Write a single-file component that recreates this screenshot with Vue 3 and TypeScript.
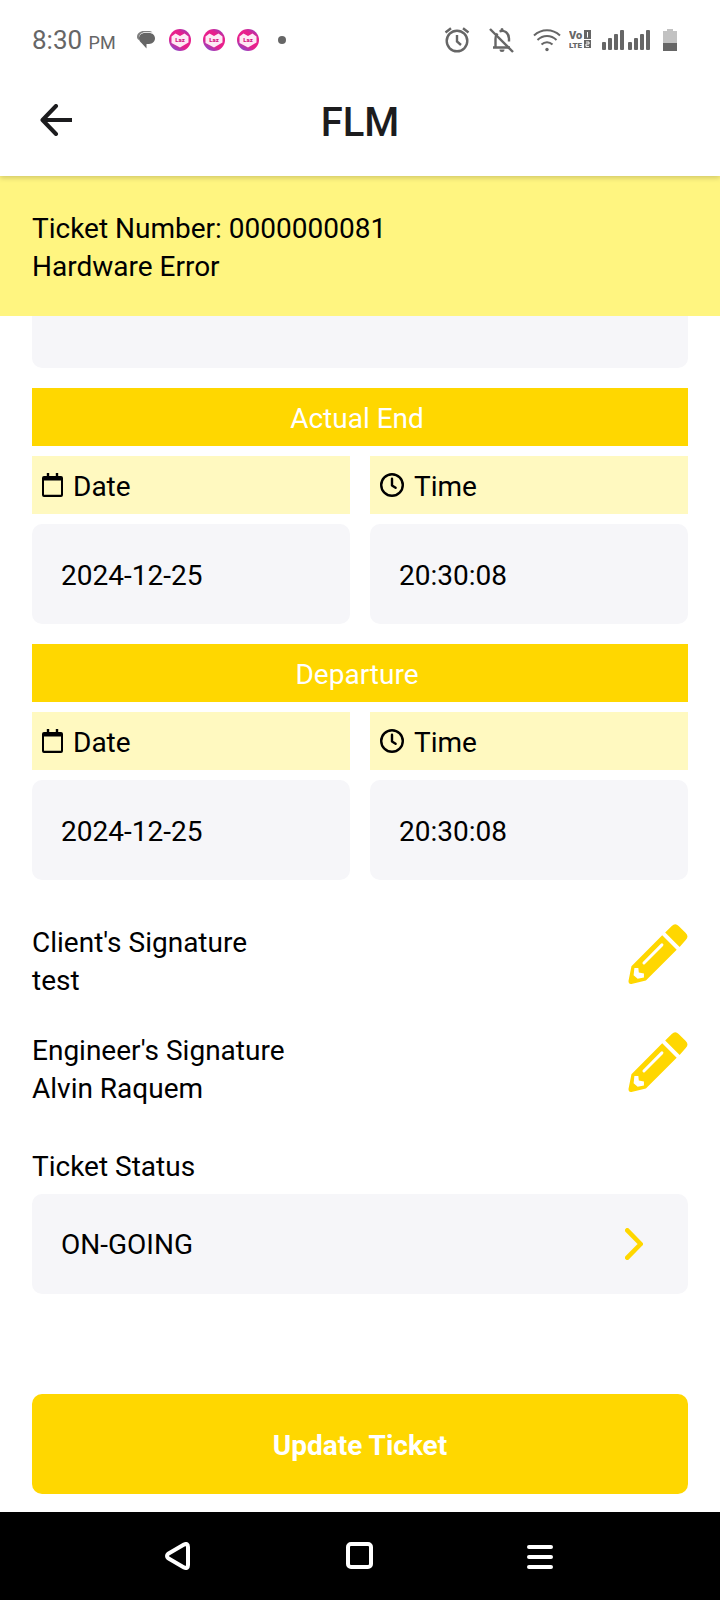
<script setup lang="ts">
import { reactive, ref } from 'vue'

interface Stamp {
  id: string
  title: string
  date: string
  time: string
}

interface Signature {
  id: string
  label: string
  name: string
}

const stamps = reactive<Stamp[]>([
  { id: 'end', title: 'Actual End', date: '2024-12-25', time: '20:30:08' },
  { id: 'departure', title: 'Departure', date: '2024-12-25', time: '20:30:08' },
])

const signatures: Signature[] = [
  { id: 'client', label: "Client's Signature", name: 'test' },
  { id: 'engineer', label: "Engineer's Signature", name: 'Alvin Raquem' },
]

const notes = ref('')
const status = ref('ON-GOING')
const notifications = [1, 2, 3]
const sims = [1, 2]
</script>

<template>
  <div class="screen">
    <div class="statusbar">
      <div class="clock">8:30 <span class="meridiem">PM</span></div>
      <div class="notices">
        <svg class="chat" width="18" height="18" viewBox="0 0 18 18">
          <path d="M0 6C0 2.500 3 0 7 0h4c2 0 3.500.500 4.500 1.200H8C4.500 1.200 2 3.500 2 7v2C.700 8.300 0 7.200 0 6z" fill="#808080" />
          <path d="M8 2h4c3.500 0 6 2.200 6 5.300S15.500 13 12 13H9.500v4.500L4.500 12C3 11 2 9.300 2 7.300 2 4.200 4.500 2 8 2z" fill="#666" />
        </svg>
        <svg v-for="n in notifications" :key="n" width="22" height="22" viewBox="0 0 22 22">
          <defs>
            <linearGradient :id="`badge${n}`" x1="0.900" y1="0" x2="0.300" y2="1">
              <stop offset="0" stop-color="#8a3fc0" />
              <stop offset="0.300" stop-color="#e8208c" />
              <stop offset="0.700" stop-color="#e8208c" />
              <stop offset="1" stop-color="#8a48c8" />
            </linearGradient>
          </defs>
          <circle cx="11" cy="11" r="11" :fill="`url(#badge${n})`" />
          <path d="M2.500 7.500L6.500 4.500 11 7l4.500-2.500 4 3v6L11 18.500 2.500 14z" fill="#fdeaf5" />
          <text class="logo-text" x="11" y="13" text-anchor="middle">Laz</text>
        </svg>
        <span class="dot"></span>
      </div>
      <div class="system">
        <svg width="26" height="26" viewBox="0 0 26 26" fill="none" stroke="#666" stroke-width="2.400">
          <circle cx="13" cy="14" r="10.300" />
          <path d="M1.500 5.500L7 1.200M24.500 5.500L19 1.200" />
          <path d="M13 8v6.500l4 3.500" />
        </svg>
        <svg width="26" height="26" viewBox="0 0 26 26" fill="none" stroke="#666" stroke-width="2.400">
          <path d="M4 20.500h17M6.500 20V12c0-2 .800-4 2-5.500M10.500 4.500c5-2 9.500 1.500 9.500 7v3" />
          <path d="M10.500 22.500h5a2.500 2.500 0 0 1-5 0zM11.500 4V2.500a1.500 1.500 0 0 1 3 0V4z" fill="#666" stroke="none" />
          <path d="M1 2l23 23" />
        </svg>
        <svg class="wifi" width="28" height="24" viewBox="0 0 28 24" fill="none" stroke="#666" stroke-width="2">
          <path d="M1 7.500c7.500-7 18.500-7 26 0M4.500 12c5.500-5.300 13.500-5.300 19 0M8.500 16.500c3.200-3 7.800-3 11 0" />
          <circle cx="14" cy="21.500" r="1.700" fill="#666" stroke="none" />
        </svg>
        <svg class="volte" width="22" height="20" viewBox="0 0 22 20">
          <text class="volte-top" x="0" y="9">Vo</text>
          <text class="volte-low" x="0" y="18">LTE</text>
          <path d="M15 0h7v9h-7zM15 10h7v8h-7z" fill="#666" />
          <path d="M18.500 2v5.500M17 12h3v2h-3v2.400h3" stroke="#fff" stroke-width="1" fill="none" />
        </svg>
        <svg v-for="s in sims" :key="s" class="signal" width="22" height="20" viewBox="0 0 22 20" fill="#666">
          <rect x="0" y="12" width="4" height="8" rx="1" />
          <rect x="6" y="8" width="4" height="12" rx="1" />
          <rect x="12" y="4" width="4" height="16" rx="1" />
          <rect x="18" y="0" width="4" height="20" rx="1" />
        </svg>
        <svg class="battery" width="14" height="22" viewBox="0 0 14 22">
          <path d="M4 0h6v2h4v12H0V2h4z" fill="#c2c2c2" />
          <path d="M0 14h14v8H0z" fill="#666" />
        </svg>
      </div>
    </div>

    <header class="header">
      <button class="back" type="button" aria-label="Back">
        <svg width="32" height="32" viewBox="0 0 32 32" fill="none" stroke="#1c1c1e" stroke-width="4">
          <path d="M32 16H3" />
          <path d="M16 2L2.500 16 16 30" stroke-linecap="round" stroke-linejoin="round" />
        </svg>
      </button>
      <h1 class="title">FLM</h1>
    </header>

    <section class="banner">
      <p>Ticket Number: 0000000081</p>
      <p>Hardware Error</p>
    </section>

    <main class="content">
      <input v-model="notes" class="field partial" type="text" aria-label="Previous entry" />

      <section v-for="stamp in stamps" :key="stamp.id" class="stamp">
        <h2 class="bar">{{ stamp.title }}</h2>
        <div class="pair">
          <div class="column">
            <label class="tag" :for="`${stamp.id}-date`">
              <svg width="21" height="24" viewBox="0 0 21 24">
                <path d="M4.800 0h2.400v3h6.600V0h2.400v3H19a2 2 0 0 1 2 2v17a2 2 0 0 1-2 2H2a2 2 0 0 1-2-2V5a2 2 0 0 1 2-2h2.800zM2 7.500v14.300h17V7.500z" fill="#000" />
              </svg>
              <span>Date</span>
            </label>
            <input :id="`${stamp.id}-date`" v-model="stamp.date" class="field" type="text" />
          </div>
          <div class="column">
            <label class="tag" :for="`${stamp.id}-time`">
              <svg width="24" height="24" viewBox="0 0 24 24" fill="none" stroke="#000">
                <circle cx="12" cy="12" r="10.800" stroke-width="2.400" />
                <path d="M12 5.800v6.700l3.600 2.300" stroke-width="2.400" stroke-linecap="round" stroke-linejoin="round" />
              </svg>
              <span>Time</span>
            </label>
            <input :id="`${stamp.id}-time`" v-model="stamp.time" class="field" type="text" />
          </div>
        </div>
      </section>

      <div class="signatures">
        <div v-for="sig in signatures" :key="sig.id" class="signature">
          <div>
            <p>{{ sig.label }}</p>
            <p>{{ sig.name }}</p>
          </div>
          <button class="edit" type="button" :aria-label="`Edit ${sig.label}`">
            <svg width="60" height="60" viewBox="0 0 60 61" fill="#ffd700">
              <path d="M37.300 8.700L44 2q3.500-3.500 7 0l7.200 7.200q3.500 3.500 0 7L52 23.300z" />
              <path fill-rule="evenodd" d="M34.300 11.500L49 26.300 17.700 57.500 3 60.900Q0 61.300 0 58L3 43zM6 44.700L5.200 52 9.300 55.700 15.700 54.500V50.300L10.500 49.400 10 44.700z" />
              <path d="M15.700 39.700L34 21.200" fill="none" stroke="#fff" stroke-width="3" stroke-linecap="round" />
            </svg>
          </button>
        </div>
      </div>

      <div class="status">
        <label for="ticket-status">Ticket Status</label>
        <div class="select">
          <select id="ticket-status" v-model="status" class="field">
            <option>ON-GOING</option>
          </select>
          <svg class="chevron" width="18" height="32" viewBox="0 0 18 32" fill="none" stroke="#ffd700" stroke-width="4.600" stroke-linecap="round" stroke-linejoin="round">
            <path d="M2.300 2.300L15.700 16 2.300 29.700" />
          </svg>
        </div>
      </div>

      <button class="submit" type="button">Update Ticket</button>
    </main>

    <nav class="navbar" aria-label="System navigation">
      <button type="button" aria-label="Go back">
        <svg width="28" height="28" viewBox="0 0 28 28" fill="none" stroke="#fff" stroke-width="4" stroke-linejoin="round">
          <path d="M19 2.600Q23 .600 23 5V23Q23 27.400 19 25.400L3.200 16.200Q.800 14 3.200 11.800z" />
        </svg>
      </button>
      <button type="button" aria-label="Home">
        <svg width="28" height="28" viewBox="0 0 28 28" fill="none" stroke="#fff" stroke-width="4">
          <rect x="2" y="2" width="23" height="23" rx="3" />
        </svg>
      </button>
      <button type="button" aria-label="Recent apps">
        <svg width="28" height="28" viewBox="0 0 28 28" fill="none" stroke="#fff" stroke-width="4" stroke-linecap="round">
          <path d="M2 5h22M2 15h22M2 25h22" />
        </svg>
      </button>
    </nav>
  </div>
</template>

<style>
body {
  margin: 0;
  background: #fff;
}
</style>

<style scoped>
.screen {
  display: flex;
  flex-direction: column;
  min-height: 100vh;
  background: #fff;
  color: #000;
  font-family: Roboto, "Liberation Sans", sans-serif;
  font-size: 28px;
  line-height: 38px;
}

.screen * {
  box-sizing: border-box;
}

svg {
  display: block;
  flex: none;
}

p,
h1,
h2 {
  margin: 0;
}

button {
  padding: 0;
  border: 0;
  background: none;
  font: inherit;
  cursor: pointer;
}

.statusbar {
  position: relative;
  z-index: 1;
  display: flex;
  align-items: center;
  height: 80px;
  padding: 0 43px 0 32px;
  background: #fff;
  color: #666;
}

.clock {
  padding-top: 2px;
  font-size: 26px;
  white-space: nowrap;
}

.meridiem {
  font-size: 18px;
}

.notices {
  display: flex;
  align-items: center;
  gap: 12px;
  margin-left: 21px;
}

.chat {
  margin-right: 2px;
}

.logo-text {
  fill: #d6137f;
  font-size: 6px;
  font-weight: 900;
}

.dot {
  width: 8px;
  height: 8px;
  margin-left: 7px;
  border-radius: 50%;
  background: #666;
}

.system {
  display: flex;
  align-items: center;
  margin-left: auto;
}

.system svg + svg {
  margin-left: 19px;
}

.system .wifi.wifi {
  margin-left: 18px;
}

.system .volte.volte {
  margin-left: 8px;
}

.system .signal.signal {
  margin-left: 11px;
}

.system .signal + .signal.signal {
  margin-left: 4px;
}

.system .battery.battery {
  margin-left: 13px;
}

.volte text {
  fill: #666;
  font-weight: 900;
}

.volte-top {
  font-size: 11px;
}

.volte-low {
  font-size: 8px;
}

.header {
  position: relative;
  display: grid;
  grid-template-columns: 32px 1fr 32px;
  align-items: center;
  height: 96px;
  padding: 0 40px 16px;
  background: #fff;
  box-shadow: 0 2px 5px rgba(0, 0, 0, 0.18);
}

.title {
  padding-top: 6px;
  color: #1c1c1e;
  font-size: 40px;
  font-weight: 500;
  line-height: 48px;
  text-align: center;
}

.banner {
  padding: 34px 32px 30px;
  background: #fff580;
}

.content {
  display: flex;
  flex: 1;
  flex-direction: column;
  padding: 0 32px 18px;
}

.field {
  display: block;
  width: 100%;
  min-width: 0;
  height: 100px;
  margin: 0;
  padding: 2px 28px 0 29px;
  border: 0;
  border-radius: 10px;
  background: #f6f6f9;
  color: #000;
  font: inherit;
  appearance: none;
}

.partial {
  height: 52px;
  border-radius: 0 0 10px 10px;
}

.stamp {
  margin-top: 20px;
}

.bar {
  padding: 12px 16px 8px 10px;
  background: #ffd700;
  color: #fff;
  font-size: 28px;
  font-weight: 400;
  text-align: center;
}

.pair {
  display: grid;
  grid-template-columns: 1fr 1fr;
  gap: 20px;
  margin-top: 10px;
}

.tag {
  display: flex;
  align-items: center;
  gap: 10px;
  height: 58px;
  margin-bottom: 10px;
  padding: 0 10px;
  background: #fff9c0;
}

.tag span {
  padding-top: 4px;
}

.signatures {
  display: grid;
  gap: 32px;
  margin-top: 44px;
}

.signature {
  display: flex;
  align-items: flex-start;
  justify-content: space-between;
}

.status {
  margin: 40px 0;
}

.status label {
  display: block;
  margin-bottom: 8px;
}

.select {
  position: relative;
}

.chevron {
  position: absolute;
  top: 34px;
  right: 45px;
  pointer-events: none;
}

.submit {
  height: 100px;
  margin-top: auto;
  padding-top: 4px;
  border-radius: 10px;
  background: #ffd700;
  color: #fff;
  font-weight: 700;
}

.navbar {
  display: grid;
  grid-template-columns: repeat(3, 1fr);
  justify-items: center;
  height: 88px;
  padding: 0 88px;
  background: #000;
}

.navbar button {
  display: flex;
  align-items: center;
}
</style>
